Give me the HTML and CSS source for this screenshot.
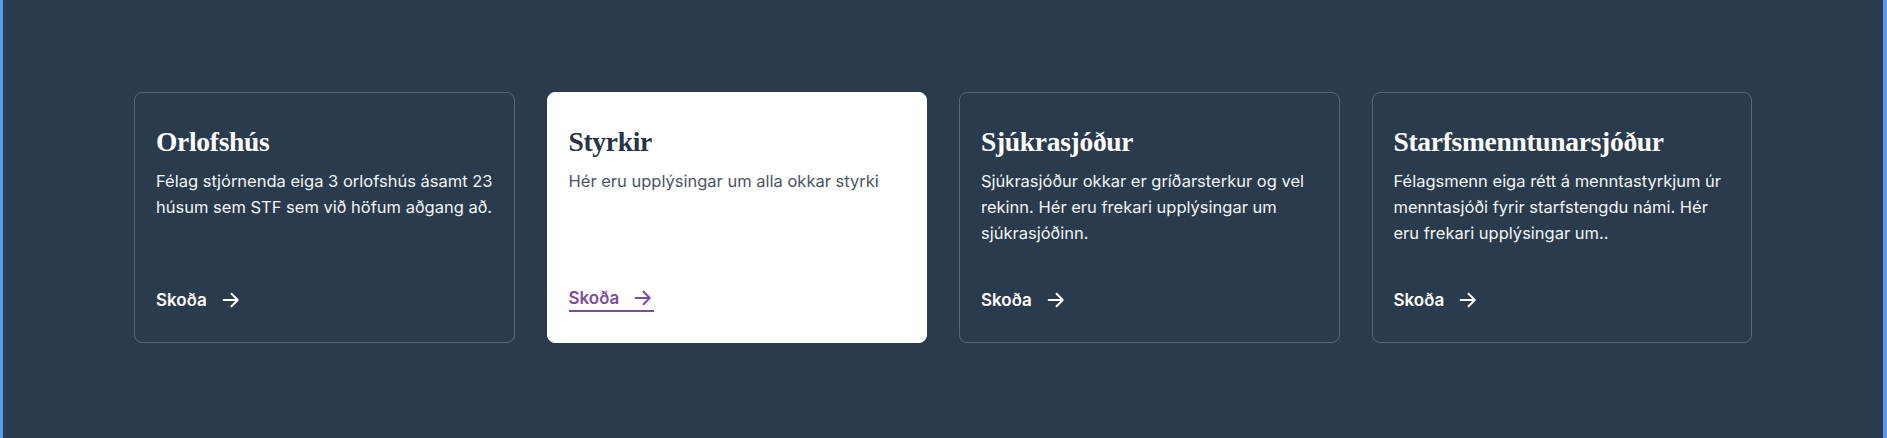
FILE: index.html
```html
<!DOCTYPE html>
<html lang="is">
<head>
<meta charset="utf-8">
<title>Þjónusta</title>
<link rel="stylesheet" href="styles.css">
</head>
<body>
<main class="page">
  <section class="cards">
    <article class="card">
      <h2 class="card-title">Orlofshús</h2>
      <p class="card-text">Félag stjórnenda eiga 3 orlofshús ásamt 23 húsum sem STF sem við höfum aðgang að.</p>
      <a class="card-link" href="#">Skoða
        <svg class="arrow" width="18" height="18" viewBox="0 0 16 16" fill="none" stroke="currentColor" stroke-width="1.8" stroke-linecap="round" stroke-linejoin="round"><path d="M1.5 8h12.5M8.5 2.5L14 8l-5.5 5.5"/></svg>
      </a>
    </article>
    <article class="card card-active">
      <h2 class="card-title">Styrkir</h2>
      <p class="card-text">Hér eru upplýsingar um alla okkar styrki</p>
      <a class="card-link" href="#">Skoða
        <svg class="arrow" width="18" height="18" viewBox="0 0 16 16" fill="none" stroke="currentColor" stroke-width="1.8" stroke-linecap="round" stroke-linejoin="round"><path d="M1.5 8h12.5M8.5 2.5L14 8l-5.5 5.5"/></svg>
      </a>
    </article>
    <article class="card">
      <h2 class="card-title">Sjúkrasjóður</h2>
      <p class="card-text">Sjúkrasjóður okkar er gríðarsterkur og vel rekinn. Hér eru frekari upplýsingar um sjúkrasjóðinn.</p>
      <a class="card-link" href="#">Skoða
        <svg class="arrow" width="18" height="18" viewBox="0 0 16 16" fill="none" stroke="currentColor" stroke-width="1.8" stroke-linecap="round" stroke-linejoin="round"><path d="M1.5 8h12.5M8.5 2.5L14 8l-5.5 5.5"/></svg>
      </a>
    </article>
    <article class="card">
      <h2 class="card-title">Starfsmenntunarsjóður</h2>
      <p class="card-text">Félagsmenn eiga rétt á menntastyrkjum úr menntasjóði fyrir starfstengdu námi. Hér eru frekari upplýsingar um..</p>
      <a class="card-link" href="#">Skoða
        <svg class="arrow" width="18" height="18" viewBox="0 0 16 16" fill="none" stroke="currentColor" stroke-width="1.8" stroke-linecap="round" stroke-linejoin="round"><path d="M1.5 8h12.5M8.5 2.5L14 8l-5.5 5.5"/></svg>
      </a>
    </article>
  </section>
</main>
</body>
</html>
```
FILE: styles.css
```css
* { box-sizing: border-box; }

html, body {
  margin: 0;
  padding: 0;
}

body {
  background: #2a3b4d;
  font-family: Inter, "Noto Sans", Arial, sans-serif;
  color: #ffffff;
}

.page {
  min-height: 438px;
  border-left: 3px solid #5a9bf2;
  border-right: 4px solid #5a9bf2;
  padding: 92px 0 95px;
}

.cards {
  width: 1618px;
  margin: 0 auto;
  display: grid;
  grid-template-columns: repeat(4, 1fr);
  gap: 32px;
}

.card {
  display: flex;
  flex-direction: column;
  align-items: flex-start;
  border: 1px solid rgba(255, 255, 255, 0.22);
  border-radius: 8px;
  padding: 31px 21px 30px;
}

.card-title {
  margin: 0;
  font-family: "Liberation Serif", "Times New Roman", serif;
  font-weight: 700;
  font-size: 27.5px;
  line-height: 36px;
  letter-spacing: -0.3px;
}

.card-text {
  margin: 8px 0 42px;
  font-size: 16.5px;
  line-height: 26px;
  color: #f3f5f7;
}

.card-link {
  margin-top: auto;
  display: inline-flex;
  align-items: center;
  gap: 15px;
  font-size: 17px;
  font-weight: 600;
  line-height: 24px;
  color: #ffffff;
  text-decoration: none;
}

.arrow {
  display: block;
}

.card-active {
  background: #ffffff;
  border-color: #ffffff;
}

.card-active .card-title {
  color: #263445;
}

.card-active .card-text {
  color: #4a5565;
}

.card-active .card-link {
  color: #7b4d9d;
  border-bottom: 2px solid #7b4d9d;
  padding-right: 2px;
}
```
